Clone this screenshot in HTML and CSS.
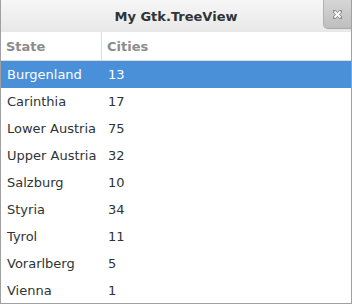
FILE: index.html
```html
<!DOCTYPE html>
<html lang="en">
<head>
    <meta charset="UTF-8">
    <title>My Gtk.TreeView</title>
    <link rel="stylesheet" href="styles.css">
</head>
<body>
    <div class="window">
        <header class="titlebar">
            <span class="title">My Gtk.TreeView</span>
            <div class="close">
                <svg width="9" height="9" viewBox="0 0 9 9">
                    <path d="M1.5 1.5 L7.5 7.5 M7.5 1.5 L1.5 7.5" stroke="#8a8a8a" stroke-width="3.4" stroke-linecap="round"/>
                    <path d="M1.5 1.5 L7.5 7.5 M7.5 1.5 L1.5 7.5" stroke="#fafafa" stroke-width="2"/>
                </svg>
            </div>
        </header>

        <div class="tree">
            <div class="row head">
                <div class="col state">State</div>
                <div class="col cities">Cities</div>
            </div>
            <div class="row selected">
                <div class="col state">Burgenland</div>
                <div class="col cities">13</div>
            </div>
            <div class="row">
                <div class="col state">Carinthia</div>
                <div class="col cities">17</div>
            </div>
            <div class="row">
                <div class="col state">Lower Austria</div>
                <div class="col cities">75</div>
            </div>
            <div class="row">
                <div class="col state">Upper Austria</div>
                <div class="col cities">32</div>
            </div>
            <div class="row">
                <div class="col state">Salzburg</div>
                <div class="col cities">10</div>
            </div>
            <div class="row">
                <div class="col state">Styria</div>
                <div class="col cities">34</div>
            </div>
            <div class="row">
                <div class="col state">Tyrol</div>
                <div class="col cities">11</div>
            </div>
            <div class="row">
                <div class="col state">Vorarlberg</div>
                <div class="col cities">5</div>
            </div>
            <div class="row">
                <div class="col state">Vienna</div>
                <div class="col cities">1</div>
            </div>
        </div>
    </div>
</body>
</html>
```

FILE: styles.css
```css
body {
    margin: 0;
    padding: 0;
    font-family: "DejaVu Sans", sans-serif;
    font-size: 13px;
    color: #2e3436;
    background: #fff;
}

.window {
    width: 352px;
    height: 304px;
    box-sizing: border-box;
    border: 1px solid #a0a0a0;
    border-top: none;
    display: flex;
    flex-direction: column;
    overflow: hidden;
}

.titlebar {
    height: 32px;
    flex: none;
    display: flex;
    align-items: center;
    justify-content: center;
    position: relative;
    background: linear-gradient(#f6f6f6, #e8e8e8);
}

.title {
    font-weight: bold;
    font-size: 13px;
    color: #2e3436;
}

.close {
    position: absolute;
    top: 0;
    right: 0;
    width: 28px;
    height: 29px;
    box-sizing: border-box;
    border-left: 1px solid #b0b0b0;
    border-bottom: 1px solid #a8a8a8;
    border-bottom-left-radius: 5px;
    background: linear-gradient(#d6d6d6, #bebebe);
    display: flex;
    align-items: center;
    justify-content: center;
}

.tree {
    display: flex;
    flex-direction: column;
}

.row {
    display: flex;
    height: 27px;
    align-items: center;
}

.col {
    box-sizing: border-box;
    padding-left: 6px;
}

.state {
    width: 101px;
}

.cities {
    flex: 1;
}

.head {
    height: 28px;
    border-bottom: 1px solid #dcdcdc;
    color: #8c8c8c;
    font-weight: bold;
}

.head .col {
    height: 100%;
    display: flex;
    align-items: center;
}

.head .state {
    padding-left: 5px;
    border-right: 1px solid #dcdcdc;
}

.head .cities {
    padding-left: 5px;
}

.selected {
    background: #4a90d9;
    color: #fff;
}
```
